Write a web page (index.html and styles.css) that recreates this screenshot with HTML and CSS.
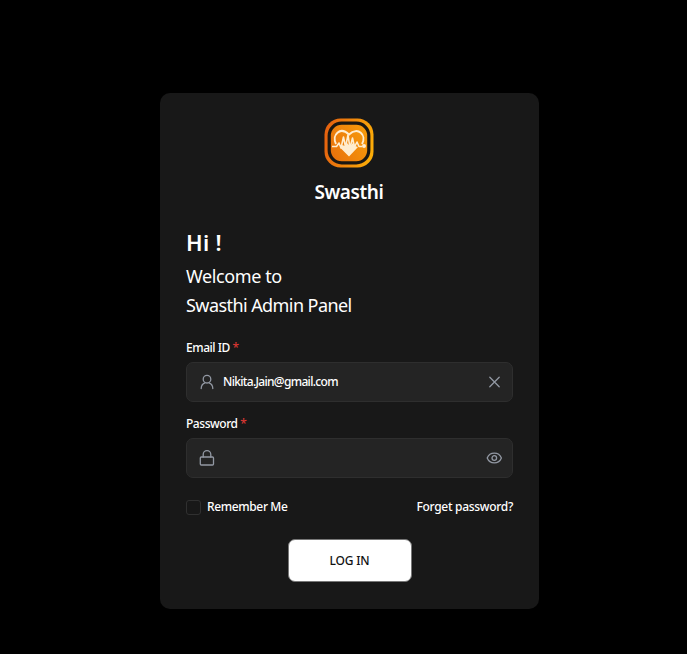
FILE: index.html
```html
<!DOCTYPE html>
<html lang="en">
<head>
<meta charset="utf-8">
<title>Swasthi Admin Panel</title>
<link rel="stylesheet" href="styles.css">
</head>
<body>
<main class="card">
  <header class="brand">
    <svg class="logo" viewBox="0 0 50 50" width="50" height="50" aria-hidden="true">
      <defs>
        <linearGradient id="ring" x1="0" x2="1" y1=".3" y2=".5"><stop offset="0" stop-color="#e4600f"/><stop offset="1" stop-color="#fcac08"/></linearGradient>
        <linearGradient id="tile" x1="0" x2="1" y1=".8" y2=".3"><stop offset="0" stop-color="#e8710c"/><stop offset="1" stop-color="#f79a0a"/></linearGradient>
      </defs>
      <rect x=".5" y=".5" width="49" height="49" rx="16" fill="url(#ring)"/>
      <rect x="5.2" y="5.2" width="39.6" height="39.6" rx="12.5" fill="url(#tile)" stroke="#1a1713" stroke-width="3.2"/>
      <path d="M12 26C7.5 17 16 8 25 16.5C34 8 43 17 38 26" fill="none" stroke="#ffedd0" stroke-width="2"/>
      <path d="M16.500 30L18 27L21 28L23 25L26 28L29 25L31 28L34 29L25 38.500Z" fill="#ffedd0"/>
      <path d="M8 28.500H12.500L15 25L17 30L19.500 19L21.500 29L24 17L26 30L28.500 20L30.500 29L33 24L35 28.500H38" fill="none" stroke="#ffedd0" stroke-width="1.6" stroke-linejoin="round"/>
      <circle cx="40" cy="28" r="2" fill="#ffedd0"/>
    </svg>
    <h1>Swasthi</h1>
  </header>
  <h2>Hi !</h2>
  <p class="welcome">Welcome to<br><span class="panel-name">Swasthi Admin Panel</span></p>
  <form>
    <div class="label">Email ID <b>*</b></div>
    <div class="field">
      <svg class="icon" viewBox="0 0 16 16" width="16" height="16"><circle cx="8" cy="5.2" r="3.8"/><path d="M2.200 14.500c0-3 1.600-4.900 3.800-5.700M10 8.800c2.200.8 3.800 2.700 3.800 5.700"/></svg>
      <span class="value">Nikita.Jain@gmail.com</span>
      <svg class="icon" viewBox="0 0 16 16" width="16" height="16"><path d="M3.800 3.300l9.400 9.400M13.200 3.300l-9.400 9.400"/></svg>
    </div>
    <div class="label">Password <b>*</b></div>
    <div class="field">
      <svg class="icon" viewBox="0 0 16 16" width="16" height="16"><rect x="1.300" y="7" width="13.200" height="8" rx="1"/><path d="M4.200 7V4.500a3.800 3.800 0 0 1 7.600 0V7"/></svg>
      <span class="value"></span>
      <svg class="icon" viewBox="0 0 16 16" width="16" height="16"><path d="M1.200 8C3.800 1.500 12.800 1.500 15.400 8C12.800 14.500 3.800 14.500 1.200 8Z"/><circle cx="8.300" cy="8" r="2.300"/></svg>
    </div>
    <div class="options">
      <label><i class="check"></i><span class="remember">Remember Me</span></label>
      <a class="forgot">Forget password?</a>
    </div>
    <button type="button">LOG IN</button>
  </form>
</main>
</body>
</html>
```
FILE: styles.css
```css
* { box-sizing: border-box; }
body {
  margin: 0;
  padding: 92.5px 0 0 159.5px;
  min-height: 654px;
  background: #000;
  color: #fff;
  font: 500 12px/18px "Noto Sans", "Open Sans", sans-serif;
}
.card {
  width: 379.5px;
  height: 516px;
  padding: 25.5px 26px 0 26.5px;
  border-radius: 10px;
  background: #181818;
}
.brand { display: flex; flex-direction: column; align-items: center; margin-right: 1px; }
.logo { display: block; }
h1 { margin: 9px 0 0; font-size: 19px; line-height: 30px; font-weight: 600; letter-spacing: -0.4px; }
h2 { margin: 19px 0 0; font-size: 22px; line-height: 32px; font-weight: 600; letter-spacing: 0.3px; }
.welcome { margin: 4px 0 0; font-size: 18px; line-height: 29px; font-weight: 400; letter-spacing: -0.4px; }
.panel-name { letter-spacing: -0.57px; }
.label { height: 18px; margin-top: 19px; letter-spacing: -0.45px; white-space: nowrap; }
.label b { color: #e53935; font-weight: 400; }
.field {
  display: flex;
  align-items: center;
  height: 40px;
  margin-top: 5px;
  padding: 0 10px 0 12px;
  border: 1px solid #2e2e2e;
  border-radius: 7px;
  background: #242424;
}
.field + .label { margin-top: 13px; }
.icon { flex: none; fill: none; stroke: #9298a3; stroke-width: 1.3; stroke-linecap: round; stroke-linejoin: round; }
.value { flex: 1; margin-left: 8px; letter-spacing: -0.68px; }
.options { display: flex; justify-content: space-between; align-items: center; margin-top: 20px; height: 18px; }
.options label { display: flex; align-items: center; gap: 6px; }
.check { width: 15px; height: 15px; border: 1px solid #303030; border-radius: 3px; }
.remember { letter-spacing: -0.36px; }
.forgot { letter-spacing: -0.3px; }
button {
  display: block;
  width: 124px;
  height: 43px;
  margin: 23px auto 0 101.5px;
  padding: 0;
  border: 1px solid #777;
  border-radius: 7px;
  background: #fff;
  color: #111;
  font: inherit;
  letter-spacing: -0.2px;
}
```
